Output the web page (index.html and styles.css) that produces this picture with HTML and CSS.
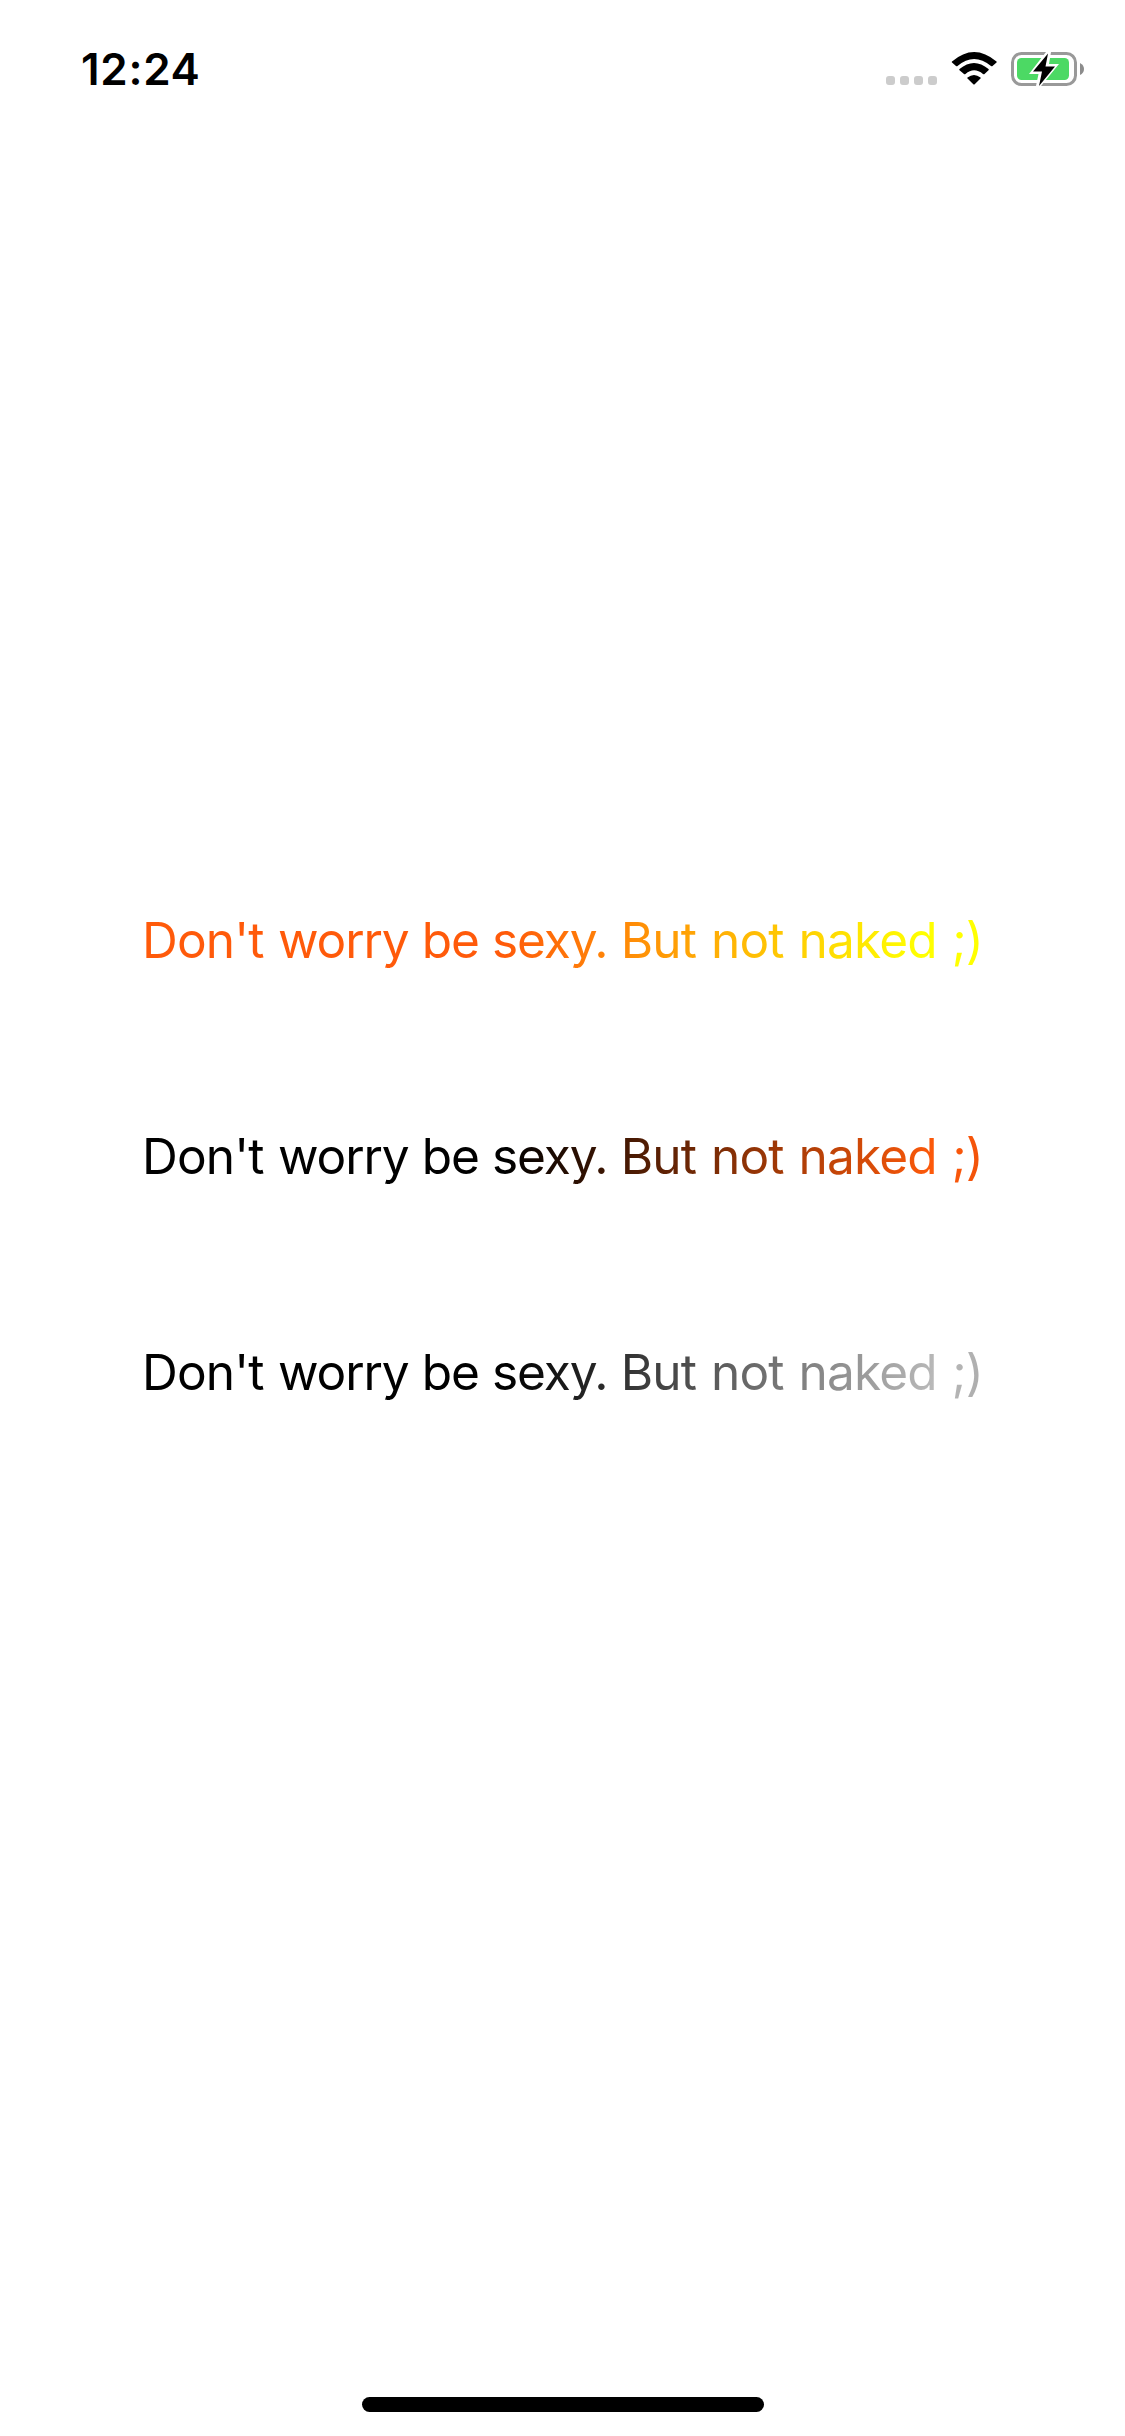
FILE: index.html
```html
<!DOCTYPE html>
<html lang="en">
<head>
<meta charset="utf-8">
<title>Gradient labels</title>
<link rel="stylesheet" href="styles.css">
</head>
<body>
<div class="screen">
  <header class="status">
    <span class="time">12:24</span>
    <svg class="indicators" width="204" height="42" viewBox="882 48 204 42">
      <g fill="#ccc"><rect x="886" y="76" width="9" height="9" rx="3"/><rect x="900" y="76" width="9" height="9" rx="3"/><rect x="914" y="76" width="9" height="9" rx="3"/><rect x="928" y="76" width="9" height="9" rx="3"/></g>
      <path d="M952 61.500Q974 42.500 996.500 61.500Q997 62 996.500 62.500L992.500 66Q992 66.500 991 66Q974 52 957.500 66Q957 66.500 956 66L952 62.500Q951.500 62 952 61.500ZM959.500 69Q974 57 988.500 69Q989 69.700 988.500 70.200L984.500 74Q984 74.500 983 74Q974 66.500 965.500 74Q964.500 74.500 964 74L959.500 70.200Q959 69.700 959.500 69ZM967.500 77.500Q974 72.500 980.500 77.500Q981 78 980.500 78.500L974.700 84.200Q974 85 973.300 84.200L967.500 78.500Q967 78 967.500 77.500Z"/>
      <rect x="1012.500" y="53.500" width="63" height="31" rx="9" fill="none" stroke="#999" stroke-width="3"/>
      <path d="M1080 63Q1084 65 1084 69Q1084 73 1080 75Z" fill="#8c8c8c"/>
      <rect x="1017" y="58" width="52" height="22" rx="4.500" fill="#4cd964"/>
      <path d="M1046 52H1051L1049 64H1059L1041 86H1036L1038.500 74H1029Z" fill="#fff"/>
      <path d="M1048 53.500L1033 71.500H1042L1039 86L1055 66.500H1045.500Z"/>
    </svg>
  </header>
  <main class="labels">
    <p class="label fire">Don't <span class="tight">worry be sexy. </span><span class="wide">But not naked ;)</span></p>
    <p class="label ember">Don't <span class="tight">worry be sexy. </span><span class="wide">But not naked ;)</span></p>
    <p class="label smoke">Don't <span class="tight">worry be sexy. </span><span class="wide">But not naked ;)</span></p>
  </main>
  <div class="home"></div>
</div>
</body>
</html>
```
FILE: styles.css
```css
body { margin: 0; background: #fff; font-family: Inter, sans-serif; }
.screen { width: 1125px; height: 2436px; display: flex; flex-direction: column; align-items: center; }
.status { width: 100%; height: 132px; box-sizing: border-box; padding: 48px 39px 0 81px; display: flex; justify-content: space-between; align-items: flex-start; }
.time { font-size: 44px; line-height: 43px; font-weight: 600; letter-spacing: .7px; }
.labels { padding-top: 778px; display: flex; flex-direction: column; gap: 156px; flex: 1; }
.label { margin: 0; font-size: 49.6px; line-height: 60px; letter-spacing: -.86px; word-spacing: 1.2px; white-space: nowrap; color: transparent; background-clip: text; -webkit-background-clip: text; }
.tight { letter-spacing: -1.1px; word-spacing: .3px; }
.wide { word-spacing: 1.8px; }
.fire { background-image: linear-gradient(100deg, #ff5a0a 43%, #ff0 92%); }
.ember { background-image: linear-gradient(100deg, #000 43.5%, #ff5a0a 94%, #f0520a); }
.smoke { background-image: linear-gradient(100deg, #000 43.5%, #bababa 94%, #acacac); }
.home { width: 402px; height: 15px; border-radius: 8px; background: #000; margin-bottom: 24px; }
```
